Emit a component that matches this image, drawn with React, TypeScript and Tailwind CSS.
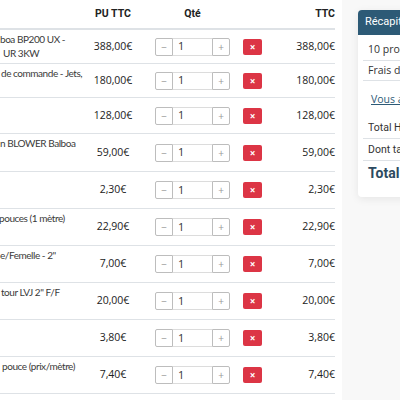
import React from "react";

type Row = { h: number; lines: { t: string; ml: number }[]; pu: string; ttc: string };

const rows: Row[] = [
  { h: 33, lines: [{ t: "boa BP200 UX -", ml: 0 }, { t: "UR 3KW", ml: 3 }], pu: "388,00€", ttc: "388,00€" },
  { h: 34, lines: [{ t: "de commande - Jets,", ml: 1 }], pu: "180,00€", ttc: "180,00€" },
  { h: 36, lines: [], pu: "128,00€", ttc: "128,00€" },
  { h: 38, lines: [{ t: "n BLOWER Balboa", ml: 0 }], pu: "59,00€", ttc: "59,00€" },
  { h: 37, lines: [], pu: "2,30€", ttc: "2,30€" },
  { h: 37, lines: [{ t: "pouces (1 mètre)", ml: -1 }], pu: "22,90€", ttc: "22,90€" },
  { h: 37, lines: [{ t: "e/Femelle - 2\"", ml: 0 }], pu: "7,00€", ttc: "7,00€" },
  { h: 37, lines: [{ t: "tour LVJ 2\" F/F", ml: 1 }], pu: "20,00€", ttc: "20,00€" },
  { h: 37, lines: [], pu: "3,80€", ttc: "3,80€" },
  { h: 37, lines: [{ t: "pouce (prix/mètre)", ml: 2 }], pu: "7,40€", ttc: "7,40€" },
];

function Qty() {
  return (
    <div className="flex h-[18px] w-[75px] items-stretch">
      <button className="w-[18px] rounded-l-[2px] border border-[#bdbdbd] bg-white text-[10px] leading-none text-[#999]">−</button>
      <div className="flex flex-1 items-center border-y border-[#dcdcdc] bg-white pl-[5px] text-[11px] text-[#333]">1</div>
      <button className="w-[18px] rounded-r-[2px] border border-[#bdbdbd] bg-white text-[10px] leading-none text-[#999]">+</button>
    </div>
  );
}

export default function App() {
  return (
    <div className="flex h-[400px] w-[400px] overflow-hidden bg-[#f8f8f8]" style={{ fontFamily: "'Open Sans', sans-serif" }}>
      <div className="w-[342px] shrink-0 bg-white pr-[7px]">
        <div className="flex h-[30px] items-center border-b-2 border-[#dee2e6] text-[10.5px] font-bold text-[#222]" style={{ fontFamily: "Roboto, sans-serif" }}>
          <div className="w-[88px]" />
          <div className="w-[50px] text-center">PU TTC</div>
          <div className="w-[109px] text-center">Qté</div>
          <div className="flex-1 text-right">TTC</div>
        </div>
        {rows.map((r, i) => (
          <div key={i} className={`flex items-center ${i > 0 ? "border-t border-[#dee2e6]" : ""}`} style={{ height: r.h }}>
            <div className="w-[88px] self-start overflow-hidden pt-[2px] text-[10px] leading-[14px] tracking-[-0.45px] text-[#3a3a3a]" style={{ fontFamily: "Lato, sans-serif" }}>
              {r.lines.map((l, j) => (
                <div key={j} className="whitespace-nowrap" style={{ marginLeft: l.ml }}>
                  {l.t}
                </div>
              ))}
            </div>
            <div className="w-[50px] text-center text-[10.5px] text-[#222]">{r.pu}</div>
            <div className="flex w-[124px] items-center gap-[13px] pl-[17px]">
              <Qty />
              <button className="flex h-[16px] w-[19px] items-center justify-center rounded-[2px] bg-[#dc3545] text-[10px] font-bold leading-none text-white">×</button>
            </div>
            <div className="flex-1 text-right text-[10.5px] text-[#222]">{r.ttc}</div>
          </div>
        ))}
        <div className="border-t border-[#dee2e6]" />
      </div>
      <div className="pl-[16px] pt-[10px]">
        <div className="w-[170px] rounded-[4px] bg-white shadow-[0_2px_8px_rgba(0,0,0,0.08)]">
          <div className="flex h-[25px] items-center rounded-t-[4px] bg-[#2d5a76] pl-[7px] text-[11px] text-white" style={{ fontFamily: "Roboto, sans-serif" }}>
            Récapitulatif
          </div>
          <div className="pb-[12px] pl-[5px] pt-[5px] text-[10.5px] text-[#333]">
            <div className="flex h-[21px] items-center border-b border-[#dee2e6] pl-[5px]">10 produits</div>
            <div className="flex h-[20px] items-center border-b border-[#dee2e6] pl-[5px]">Frais de port</div>
            <div className="flex h-[37px] items-center pl-[8px] text-[#2d5a76] underline">Vous avez un code promo ?</div>
            <div className="flex h-[21px] items-center border-b border-[#dee2e6] pl-[5px]" style={{ fontFamily: "Roboto, sans-serif" }}>Total HT</div>
            <div className="flex h-[22px] items-center border-b border-[#dee2e6] pl-[5px]" style={{ fontFamily: "Roboto, sans-serif" }}>Dont taxes</div>
            <div className="flex h-[24px] items-center pl-[5px] text-[14px] font-bold text-[#2c4a60]" style={{ fontFamily: "Roboto, sans-serif" }}>Total</div>
          </div>
        </div>
      </div>
    </div>
  );
}
